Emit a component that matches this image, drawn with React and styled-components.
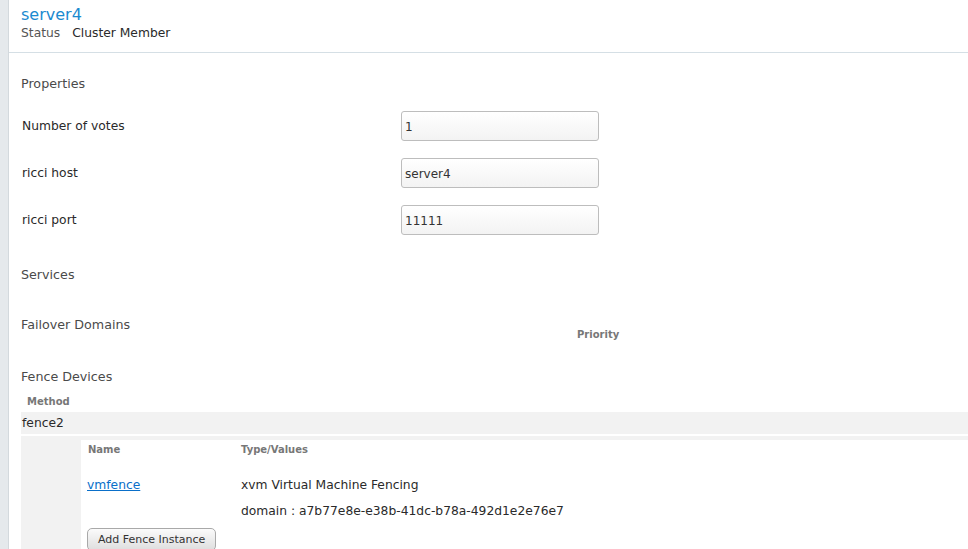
import React from 'react';
import styled, { createGlobalStyle } from 'styled-components';

const GlobalStyle = createGlobalStyle`
  html, body {
    margin: 0;
    padding: 0;
    background: #fff;
  }
  body {
    font-family: "DejaVu Sans", "Liberation Sans", sans-serif;
    color: #222;
  }
`;

const Page = styled.div`
  display: flex;
  width: 968px;
  height: 549px;
  overflow: hidden;
`;

const SideStrip = styled.div`
  width: 8px;
  flex: none;
  background: #e5e9ec;
  border-right: 1px solid #d3d9dd;
`;

const Main = styled.div`
  flex: 1;
  min-width: 0;
`;

const Header = styled.div`
  height: 53px;
  box-sizing: border-box;
  padding: 4px 0 0 12px;
  border-bottom: 1px solid #d5dfe5;
`;

const NodeName = styled.div`
  font-size: 16px;
  line-height: 21px;
  color: #1b8ad0;
`;

const StatusLine = styled.div`
  font-size: 12.3px;
  line-height: 16px;
  display: flex;
  gap: 12px;
`;

const StatusLabel = styled.span`
  color: #555;
`;

const StatusValue = styled.span`
  color: #2a2a2a;
`;

const Content = styled.div`
  padding: 20px 0 0 12px;
`;

const SectionTitle = styled.div`
  font-size: 12.7px;
  line-height: 20px;
  padding-top: 1px;
  color: #4a4a4a;
  margin-top: ${p => p.$top || 0}px;
`;

const Form = styled.div`
  margin-top: 17px;
  display: flex;
  flex-direction: column;
  gap: 17px;
`;

const FieldRow = styled.div`
  display: grid;
  grid-template-columns: 380px 198px;
  align-items: center;
  height: 30px;
`;

const FieldLabel = styled.label`
  font-size: 12.3px;
  color: #2a2a2a;
  padding-left: 1px;
`;

const TextInput = styled.input`
  box-sizing: border-box;
  width: 198px;
  height: 30px;
  border: 1px solid #bdbdbd;
  border-radius: 3px;
  background: linear-gradient(#ffffff, #f3f3f3);
  font-family: "DejaVu Sans", sans-serif;
  font-size: 12px;
  color: #333;
  padding: 1px 3px 0;
  outline: none;
`;

const DomainHead = styled.div`
  margin-top: 29px;
  display: grid;
  grid-template-columns: 556px auto;
  height: 27px;
`;

const ColHead = styled.div`
  font-size: 10px;
  font-weight: bold;
  line-height: 12px;
  color: #777;
  align-self: ${p => (p.$bottom ? 'end' : 'auto')};
  padding-left: ${p => p.$indent || 0}px;
`;

const MethodHead = styled(ColHead)`
  margin-top: 9px;
`;

const MethodRow = styled.div`
  margin-top: 4px;
  height: 22px;
  line-height: 22px;
  background: #f2f2f2;
  font-size: 12.3px;
  padding-left: 1px;
  color: #2a2a2a;
`;

const MethodBody = styled.div`
  margin-top: 2px;
  background: #f2f2f2;
  padding: 4px 0 0 60px;
  height: 120px;
`;

const Instances = styled.div`
  background: #fff;
  height: 100%;
  padding: 4px 0 0 6px;
`;

const InstanceGrid = styled.div`
  display: grid;
  grid-template-columns: 154px auto;
  grid-auto-rows: auto;
`;

const Cell = styled.div`
  font-size: 12.3px;
  line-height: 20px;
  color: #2a2a2a;
  margin-top: ${p => p.$top || 0}px;
`;

const DeviceLink = styled.a`
  color: #0a6fc9;
  text-decoration: underline;
  font-size: 12.3px;
  cursor: pointer;
`;

const AddButton = styled.button`
  margin-top: 7px;
  height: 23px;
  padding: 0 10px;
  border: 1px solid #a9a9a9;
  border-radius: 5px;
  background: linear-gradient(#fbfbfb, #dedede);
  font-family: "DejaVu Sans", sans-serif;
  font-size: 11px;
  color: #333;
`;

export default function App() {
  return (
    <>
      <GlobalStyle />
      <Page>
        <SideStrip />
        <Main>
          <Header>
            <NodeName>server4</NodeName>
            <StatusLine>
              <StatusLabel>Status</StatusLabel>
              <StatusValue>Cluster Member</StatusValue>
            </StatusLine>
          </Header>
          <Content>
            <SectionTitle>Properties</SectionTitle>
            <Form>
              <FieldRow>
                <FieldLabel>Number of votes</FieldLabel>
                <TextInput defaultValue="1" />
              </FieldRow>
              <FieldRow>
                <FieldLabel>ricci host</FieldLabel>
                <TextInput defaultValue="server4" />
              </FieldRow>
              <FieldRow>
                <FieldLabel>ricci port</FieldLabel>
                <TextInput defaultValue="11111" />
              </FieldRow>
            </Form>
            <SectionTitle $top={29}>Services</SectionTitle>
            <DomainHead>
              <SectionTitle>Failover Domains</SectionTitle>
              <ColHead $bottom>Priority</ColHead>
            </DomainHead>
            <SectionTitle $top={25}>Fence Devices</SectionTitle>
            <MethodHead $indent={6}>Method</MethodHead>
            <MethodRow>fence2</MethodRow>
            <MethodBody>
              <Instances>
                <InstanceGrid>
                  <ColHead $indent={1}>Name</ColHead>
                  <ColHead>Type/Values</ColHead>
                  <Cell $top={19}><DeviceLink>vmfence</DeviceLink></Cell>
                  <Cell $top={19}>xvm Virtual Machine Fencing</Cell>
                  <Cell $top={6} />
                  <Cell $top={6}>domain : a7b77e8e-e38b-41dc-b78a-492d1e2e76e7</Cell>
                </InstanceGrid>
                <AddButton>Add Fence Instance</AddButton>
              </Instances>
            </MethodBody>
          </Content>
        </Main>
      </Page>
    </>
  );
}
